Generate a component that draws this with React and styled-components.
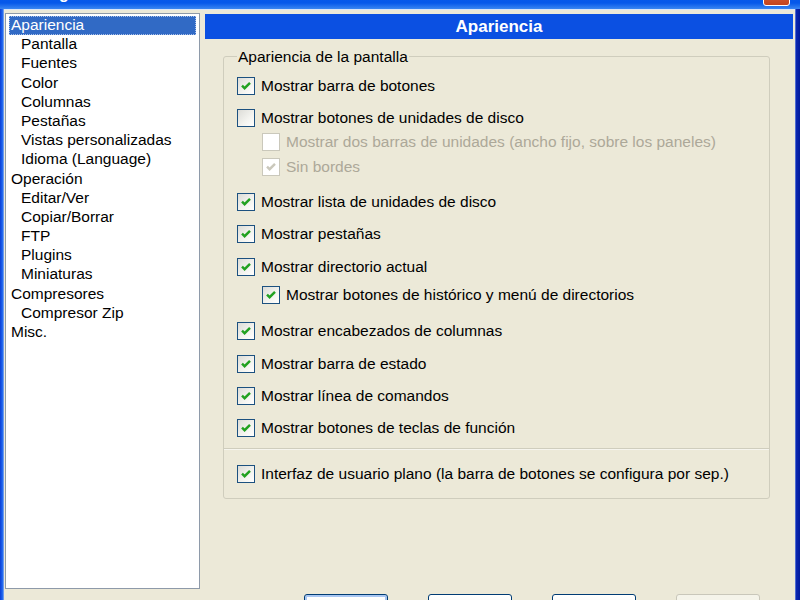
import styled, { createGlobalStyle } from 'styled-components';

const GlobalStyle = createGlobalStyle`
  html, body {
    margin: 0;
    padding: 0;
    overflow: hidden;
    background: #ece9d8;
  }
  body {
    font-family: "Liberation Sans", Arial, sans-serif;
    font-size: 15.5px;
    color: #000;
  }
`;

const Window = styled.div`
  width: 800px;
  height: 600px;
  overflow: hidden;
  display: flex;
  flex-direction: column;
  background: #ece9d8;
`;

const TitleBar = styled.div`
  height: 30px;
  margin-top: -21px;
  flex-shrink: 0;
  display: flex;
  align-items: center;
  padding: 0 10px 0 4px;
  gap: 4px;
  background: linear-gradient(to bottom, #0a5ae8 0%, #0658ea 80%, #3a86f2 100%);
  color: #fff;
`;

const TitleText = styled.span`
  flex: 1;
  font-weight: bold;
  font-size: 16px;
  padding-left: 14px;
`;

const CloseButton = styled.div`
  align-self: flex-end;
  margin-bottom: 3px;
  width: 27px;
  height: 25px;
  box-sizing: border-box;
  border: 1px solid #fff;
  border-radius: 3px;
  background: linear-gradient(to bottom, #e37a55, #c4431e);
`;

const Frame = styled.div`
  flex: 1;
  min-height: 0;
  display: flex;
`;

const Edge = styled.div`
  width: ${(p) => (p.$right ? 5 : 4)}px;
  flex-shrink: 0;
  background: ${(p) =>
    p.$right
      ? 'linear-gradient(to right, #6f8fe0 0%, #0a26b0 30%, #001a9c 100%)'
      : 'linear-gradient(to right, #0a3ed6 0%, #1d64ee 60%, #8fb2ef 100%)'};
`;

const Content = styled.div`
  flex: 1;
  display: flex;
  align-items: flex-start;
  gap: 5px;
  padding: 3px 2px 0 1px;
  border-top: 1px solid #d8e4f8;
`;

const Tree = styled.ul`
  list-style: none;
  margin: 0;
  width: 195px;
  height: 576px;
  flex-shrink: 0;
  box-sizing: border-box;
  padding: 2px 3px;
  background: #fff;
  border: 1px solid #8e9aa9;
`;

const TreeItem = styled.li`
  height: 19.2px;
  line-height: 18px;
  padding-left: ${(p) => (p.$child ? 12 : 2)}px;
  white-space: nowrap;
  background: ${(p) => (p.$selected ? '#316ac5' : 'transparent')};
  color: ${(p) => (p.$selected ? '#fff' : '#000')};
  outline: ${(p) => (p.$selected ? '1px dotted #a9c0e8' : 'none')};
  outline-offset: -1px;
`;

const Panel = styled.div`
  flex: 1;
  display: flex;
  flex-direction: column;
`;

const Header = styled.div`
  height: 25px;
  margin-top: 1px;
  background: #0b50e2;
  color: #fff;
  font-weight: bold;
  font-size: 17px;
  line-height: 25px;
  text-align: center;
`;

const Group = styled.fieldset`
  margin: 8px 23px 0 18px;
  padding: 8px 13px 12px 13px;
  border: 1px solid #cfcdbd;
  border-radius: 3px;
  display: flex;
  flex-direction: column;
`;

const Legend = styled.legend`
  padding: 0 1px;
  line-height: 19px;
  font-size: 15.5px;
`;

const Row = styled.label`
  display: flex;
  align-items: center;
  gap: 6px;
  height: 24px;
  margin-top: ${(p) => p.$mt || 0}px;
  padding-left: ${(p) => (p.$sub ? 25 : 0)}px;
  color: ${(p) => (p.$disabled ? '#aca899' : '#000')};
  white-space: nowrap;
`;

const Box = styled.span`
  width: 18px;
  height: 18px;
  flex-shrink: 0;
  box-sizing: border-box;
  display: flex;
  align-items: center;
  justify-content: center;
  border: 1px solid ${(p) => (p.$disabled ? '#cac8bb' : '#1c5180')};
  background: ${(p) =>
    p.$disabled ? '#fff' : 'linear-gradient(135deg, #dcdcd7 0%, #f4f4f0 60%, #ffffff 100%)'};
`;

const Separator = styled.div`
  margin: 8px -13px 0;
  border-top: 1px solid #cfcdbd;
  border-bottom: 1px solid #f6f5ee;
`;

const ButtonRow = styled.div`
  display: flex;
  justify-content: flex-end;
  gap: 40px;
  margin-top: 95px;
  padding-right: 33px;
`;

const Button = styled.button`
  width: 84px;
  height: 34px;
  flex-shrink: 0;
  padding: 0;
  border-radius: 3px;
  font-family: inherit;
  font-size: 15.5px;
  border: 1px solid ${(p) => (p.disabled ? '#c9c7ba' : '#003c74')};
  color: ${(p) => (p.disabled ? '#aca899' : '#000')};
  background: ${(p) =>
    p.disabled ? '#f5f4ea' : 'linear-gradient(to bottom, #ffffff 0%, #f3f3ef 70%, #d6d0c5 100%)'};
  box-shadow: ${(p) => (p.$default ? 'inset 0 0 0 2px #a8c6f2' : 'none')};
`;

function Check({ checked, disabled }) {
  return (
    <Box $disabled={disabled}>
      {checked && (
        <svg width="12" height="12" viewBox="0 0 12 12">
          <path
            d="M2 5.6 L4.6 8.2 L10 2.8"
            fill="none"
            stroke={disabled ? '#cac8bb' : '#21a121'}
            strokeWidth="2.4"
          />
        </svg>
      )}
    </Box>
  );
}

const tree = [
  { label: 'Apariencia', selected: true },
  { label: 'Pantalla', child: true },
  { label: 'Fuentes', child: true },
  { label: 'Color', child: true },
  { label: 'Columnas', child: true },
  { label: 'Pestañas', child: true },
  { label: 'Vistas personalizadas', child: true },
  { label: 'Idioma (Language)', child: true },
  { label: 'Operación' },
  { label: 'Editar/Ver', child: true },
  { label: 'Copiar/Borrar', child: true },
  { label: 'FTP', child: true },
  { label: 'Plugins', child: true },
  { label: 'Miniaturas', child: true },
  { label: 'Compresores' },
  { label: 'Compresor Zip', child: true },
  { label: 'Misc.' },
];

const options = [
  { label: 'Mostrar barra de botones', checked: true, mt: 0 },
  { label: 'Mostrar botones de unidades de disco', checked: false, mt: 8 },
  {
    label: 'Mostrar dos barras de unidades (ancho fijo, sobre los paneles)',
    checked: false,
    sub: true,
    disabled: true,
    mt: 0,
  },
  { label: 'Sin bordes', checked: true, sub: true, disabled: true, mt: 1 },
  { label: 'Mostrar lista de unidades de disco', checked: true, mt: 11 },
  { label: 'Mostrar pestañas', checked: true, mt: 8 },
  { label: 'Mostrar directorio actual', checked: true, mt: 9 },
  {
    label: 'Mostrar botones de histórico y menú de directorios',
    checked: true,
    sub: true,
    mt: 4,
  },
  { label: 'Mostrar encabezados de columnas', checked: true, mt: 12 },
  { label: 'Mostrar barra de estado', checked: true, mt: 9 },
  { label: 'Mostrar línea de comandos', checked: true, mt: 8 },
  { label: 'Mostrar botones de teclas de función', checked: true, mt: 8 },
];

export default function App() {
  return (
    <>
      <GlobalStyle />
      <Window>
        <TitleBar>
          <TitleText>Configuración</TitleText>
          <CloseButton />
        </TitleBar>
        <Frame>
          <Edge />
          <Content>
            <Tree>
              {tree.map((t) => (
                <TreeItem key={t.label} $child={t.child} $selected={t.selected}>
                  {t.label}
                </TreeItem>
              ))}
            </Tree>
            <Panel>
              <Header>Apariencia</Header>
              <Group>
                <Legend>Apariencia de la pantalla</Legend>
                {options.map((o) => (
                  <Row key={o.label} $mt={o.mt} $sub={o.sub} $disabled={o.disabled}>
                    <Check checked={o.checked} disabled={o.disabled} />
                    {o.label}
                  </Row>
                ))}
                <Separator />
                <Row $mt={12}>
                  <Check checked />
                  Interfaz de usuario plano (la barra de botones se configura por sep.)
                </Row>
              </Group>
              <ButtonRow>
                <Button $default>Aceptar</Button>
                <Button>Cancelar</Button>
                <Button>Aplicar</Button>
                <Button disabled>Ayuda</Button>
              </ButtonRow>
            </Panel>
          </Content>
          <Edge $right />
        </Frame>
      </Window>
    </>
  );
}
